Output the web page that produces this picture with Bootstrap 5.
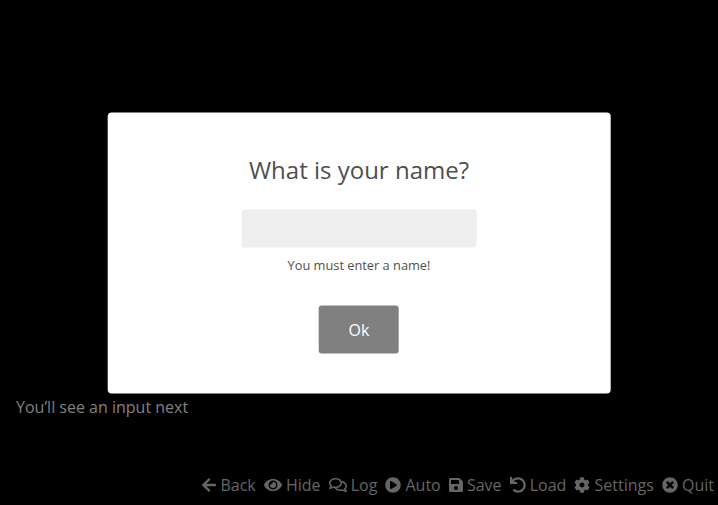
<!DOCTYPE html>
<html lang="en">
<head>
<meta charset="utf-8">
<meta name="viewport" content="width=device-width, initial-scale=1">
<title>What is your name?</title>
<link href="https://cdn.jsdelivr.net/npm/bootstrap@5.3.0/dist/css/bootstrap.min.css" rel="stylesheet">
<style>
body{font-family:"Open Sans",sans-serif;font-size:16px;line-height:24px;background:#000}
.stage{height:505px;background:#000}
.say{color:#808080;padding:0 16px;height:73px}
.quick{color:#666;height:37px;padding-bottom:3px}
.quick button{color:inherit;padding:0 4px;white-space:nowrap;gap:4.16px;line-height:24px}
.quick svg{height:16px;fill:currentColor;flex:none}
.prompt{width:70%;height:281px;border-radius:4px;color:#4f4f4f}
.prompt h1{font-size:24px;line-height:36px;font-weight:400;margin:39px 0 0}
.prompt input{width:235px;height:38px;margin-top:22px;background:#eee;border-radius:3px}
.prompt small{font-size:12.8px;line-height:20px;margin-top:7px}
.ok{width:80px;height:48px;margin-top:31px;background:#808080;color:#fff;border-radius:3px}
</style>
</head>
<body>
<main class="stage position-relative d-flex flex-column justify-content-end overflow-hidden">
  <p class="say m-0">You’ll see an input next</p>
  <nav class="quick d-flex justify-content-end align-items-center">
    <button class="border-0 bg-transparent d-flex align-items-center"><svg viewBox="0 0 448 512" width="14"><path d="M257.5 445.1l-22.2 22.2c-9.4 9.4-24.6 9.4-33.9 0L7 273c-9.4-9.4-9.4-24.6 0-33.9L201.4 44.7c9.4-9.4 24.6-9.4 33.9 0l22.2 22.2c9.5 9.5 9.3 25-.4 34.3L136.6 216H424c13.3 0 24 10.7 24 24v32c0 13.3-10.7 24-24 24H136.6l120.5 114.8c9.8 9.3 10 24.8.4 34.3z"/></svg>Back</button>
    <button class="border-0 bg-transparent d-flex align-items-center"><svg viewBox="0 0 576 512" width="18"><path d="M572.52 241.4C518.29 135.59 410.93 64 288 64S57.68 135.64 3.48 241.41a32.35 32.35 0 0 0 0 29.19C57.71 376.41 165.07 448 288 448s230.32-71.64 284.52-177.41a32.35 32.35 0 0 0 0-29.19zM288 400a144 144 0 1 1 144-144 143.93 143.93 0 0 1-144 144zm0-240a95.31 95.31 0 0 0-25.31 3.79 47.85 47.85 0 0 1-66.9 66.9A95.78 95.78 0 1 0 288 160z"/></svg>Hide</button>
    <button class="border-0 bg-transparent d-flex align-items-center"><svg viewBox="0 0 576 512" width="18"><path d="M532 386.2c27.5-27.1 44-61.1 44-98.2 0-80-76.5-146.1-176.2-157.9C368.3 72.5 294.3 32 208 32 93.1 32 0 103.6 0 192c0 37 16.5 71 44 98.2-15.3 30.7-37.3 54.5-37.7 54.9-6.3 6.7-8.1 16.5-4.4 25 3.6 8.5 12 14 21.2 14 53.5 0 96.7-20.2 125.2-38.8 9.2 2.1 18.7 3.7 28.4 4.9C208.1 407.6 281.8 448 368 448c20.8 0 40.8-2.4 59.8-6.8C456.3 459.7 499.4 480 553 480c9.2 0 17.5-5.5 21.2-14 3.6-8.5 1.9-18.3-4.4-25-.4-.3-22.5-24.1-37.8-54.8zm-392.8-92.3L122.1 305c-14.1 9.1-28.5 16.3-43.1 21.4 2.7-4.7 5.4-9.7 8-14.8l15.5-31.1L77.7 256C64.2 242.6 48 220.7 48 192c0-60.7 73.3-112 160-112s160 51.3 160 112-73.3 112-160 112c-16.5 0-33-1.9-49-5.6l-19.8-4.5zM498.3 352l-24.7 24.4 15.5 31.1c2.6 5.1 5.3 10.1 8 14.8-14.6-5.1-29-12.3-43.1-21.4l-17.1-11.1-19.9 4.6c-16 3.7-32.5 5.6-49 5.6-54 0-102.2-20.1-131.3-49.7C338 339.5 416 272.9 416 192c0-3.4-.4-6.7-.7-10C479.7 196.5 528 238.8 528 288c0 28.7-16.2 50.6-29.7 64z"/></svg>Log</button>
    <button class="border-0 bg-transparent d-flex align-items-center"><svg viewBox="0 0 512 512" width="16"><path d="M256 8C119 8 8 119 8 256s111 248 248 248 248-111 248-248S393 8 256 8zm115.7 272l-176 101c-15.8 8.8-35.7-2.5-35.7-21V152c0-18.4 19.8-29.8 35.7-21l176 107c16.4 9.2 16.4 32.9 0 42z"/></svg>Auto</button>
    <button class="border-0 bg-transparent d-flex align-items-center"><svg viewBox="0 0 448 512" width="14"><path d="M433.941 129.941l-83.882-83.882A48 48 0 0 0 316.118 32H48C21.49 32 0 53.49 0 80v352c0 26.51 21.49 48 48 48h352c26.51 0 48-21.49 48-48V163.882a48 48 0 0 0-14.059-33.941zM224 416c-35.346 0-64-28.654-64-64 0-35.346 28.654-64 64-64s64 28.654 64 64c0 35.346-28.654 64-64 64zm96-304.52V212c0 6.627-5.373 12-12 12H76c-6.627 0-12-5.373-12-12V108c0-6.627 5.373-12 12-12h228.52c3.183 0 6.235 1.264 8.485 3.515l3.48 3.48A11.996 11.996 0 0 1 320 111.48z"/></svg>Save</button>
    <button class="border-0 bg-transparent d-flex align-items-center"><svg viewBox="0 0 512 512" width="16"><path d="M212.333 224.333H12c-6.627 0-12-5.373-12-12V12C0 5.373 5.373 0 12 0h48c6.627 0 12 5.373 12 12v78.112C117.773 39.279 184.26 7.47 258.175 8.007c136.906.994 246.448 111.623 246.157 248.532C504.041 393.258 393.12 504 256.333 504c-64.089 0-122.496-24.313-166.51-64.215-5.099-4.622-5.334-12.554-.467-17.42l33.967-33.967c4.474-4.474 11.662-4.717 16.401-.525C170.76 415.336 211.58 432 256.333 432c97.268 0 176-78.716 176-176 0-97.267-78.716-176-176-176-58.496 0-110.28 28.476-142.274 72.333h98.274c6.627 0 12 5.373 12 12v48c0 6.627-5.373 12-12 12z"/></svg>Load</button>
    <button class="border-0 bg-transparent d-flex align-items-center"><svg viewBox="0 0 512 512" width="16"><path d="M487.4 315.7l-42.6-24.6c4.3-23.2 4.3-47 0-70.2l42.6-24.6c4.9-2.8 7.1-8.6 5.5-14-11.1-35.6-30-67.8-54.7-94.6-3.8-4.1-10-5.1-14.8-2.3L380.8 110c-17.9-15.4-38.5-27.3-60.8-35.1V25.8c0-5.6-3.9-10.5-9.4-11.7-36.7-8.2-74.3-7.8-109.2 0-5.5 1.2-9.4 6.1-9.4 11.7V75c-22.2 7.9-42.8 19.8-60.8 35.1L88.7 85.5c-4.9-2.8-11-1.9-14.8 2.3-24.7 26.7-43.6 58.9-54.7 94.6-1.7 5.4.6 11.2 5.5 14L67.3 221c-4.3 23.2-4.3 47 0 70.2l-42.6 24.6c-4.9 2.8-7.1 8.6-5.5 14 11.1 35.6 30 67.8 54.7 94.6 3.8 4.1 10 5.1 14.8 2.3l42.6-24.6c17.9 15.4 38.5 27.3 60.8 35.1v49.2c0 5.6 3.9 10.5 9.4 11.7 36.7 8.2 74.3 7.8 109.2 0 5.5-1.2 9.4-6.1 9.4-11.7v-49.2c22.2-7.9 42.8-19.8 60.8-35.1l42.6 24.6c4.9 2.8 11 1.9 14.8-2.3 24.7-26.7 43.6-58.9 54.7-94.6 1.5-5.5-.7-11.3-5.6-14.1zM256 336c-44.1 0-80-35.9-80-80s35.9-80 80-80 80 35.9 80 80-35.9 80-80 80z"/></svg>Settings</button>
    <button class="border-0 bg-transparent d-flex align-items-center"><svg viewBox="0 0 512 512" width="16"><path d="M256 8C119 8 8 119 8 256s111 248 248 248 248-111 248-248S393 8 256 8zm121.6 313.1c4.7 4.7 4.7 12.3 0 17L338 377.6c-4.7 4.7-12.3 4.7-17 0L256 312l-65.1 65.6c-4.7 4.7-12.3 4.7-17 0L134.4 338c-4.7-4.7-4.7-12.3 0-17l65.6-65-65.6-65.1c-4.7-4.7-4.7-12.3 0-17l39.6-39.6c4.7-4.7 12.3-4.7 17 0l65 65.7 65.1-65.6c4.7-4.7 12.3-4.7 17 0l39.6 39.6c4.7 4.7 4.7 12.3 0 17L312 256l65.6 65.1z"/></svg>Quit</button>
  </nav>
  <form class="prompt position-absolute top-50 start-50 translate-middle bg-white d-flex flex-column align-items-center text-center" onsubmit="return false">
    <h1>What is your name?</h1>
    <input class="border-0" type="text" aria-label="Name">
    <small>You must enter a name!</small>
    <button class="ok border-0" type="submit">Ok</button>
  </form>
</main>
<script src="https://cdn.jsdelivr.net/npm/bootstrap@5.3.0/dist/js/bootstrap.bundle.min.js"></script>
</body>
</html>
